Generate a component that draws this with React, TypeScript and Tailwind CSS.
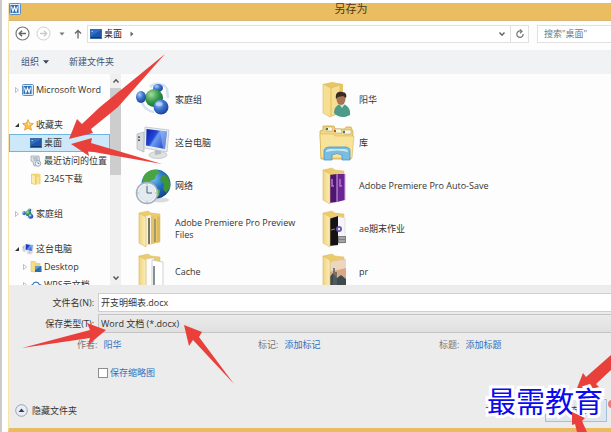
import { useState } from "react";
import type { ReactNode } from "react";

const WordIcon = ({ className }: { className: string }) => (
  <svg viewBox="0 0 12 12" className={className}>
    <rect x="0.5" y="0.5" width="11" height="11" rx="1" fill="#dcebf8" stroke="#5c8fc4" />
    <rect x="1.5" y="2" width="8" height="8" fill="#2f6fb6" />
    <path d="M2.5 3.5l1.4 5 1.6-4.5 1.6 4.5 1.4-5" fill="none" stroke="#fff" strokeWidth="1.1" />
  </svg>
);

const DesktopIcon = ({ className }: { className: string }) => (
  <svg viewBox="0 0 12 10" className={className}>
    <rect x="0.5" y="0.5" width="11" height="9" fill="#1f57ab" stroke="#3c6ba8" />
    <path d="M1 1h10L1 7z" fill="#2f6fc6" />
    <rect x="1" y="8" width="10" height="1" fill="#12366f" />
    <rect x="1.5" y="2" width="1.5" height="1" fill="#9cc8f4" />
  </svg>
);

const StarIcon = () => (
  <svg viewBox="0 0 12 12" className="size-3">
    <path d="M6 0.6l1.6 3.6 3.9.4-2.9 2.6.9 4L6 9.2l-3.5 2 .9-4L.5 4.6l3.9-.4z" fill="#fbc04a" stroke="#e2932b" strokeWidth="0.7" />
    <path d="M6 2l1 2.8 2.6.3L6 6z" fill="#fff0b5" />
  </svg>
);

const RecentIcon = () => (
  <svg viewBox="0 0 12 12" className="size-3">
    <path d="M1 1h8l1 9-6 1-1-4-2-1z" fill="#dde3ea" stroke="#929fae" strokeWidth="0.7" />
    <path d="M3 3h5M3.5 5h4.500" stroke="#7e93aa" strokeWidth="0.8" />
    <circle cx="8" cy="8.500" r="2.800" fill="#eff5fa" stroke="#7d93ab" strokeWidth="0.7" />
    <path d="M8 7v1.600h1.400" stroke="#4b6076" strokeWidth="0.7" fill="none" />
  </svg>
);

const SmallFolder = () => (
  <svg viewBox="0 0 12 12" className="size-3">
    <path d="M1.500 1l5-.5 4 .5v10l-5 .5-4-1z" fill="#f3d672" />
    <path d="M1.500 1l4 1.500v9l-4-1z" fill="#fbebae" stroke="#d9b957" strokeWidth="0.5" />
    <path d="M8 4v7" stroke="#fff3c4" strokeWidth="1" />
  </svg>
);

const SmallDesktopFolder = () => (
  <svg viewBox="0 0 12 12" className="size-3">
    <path d="M1 .5h4l1 1v9.500l-5-.5z" fill="#f5de8a" stroke="#d5b558" strokeWidth="0.5" />
    <path d="M4.500 2h6v8h-6z" fill="#ecd27a" />
    <rect x="5" y="5" width="6.500" height="6" fill="#2d6ca8" />
    <path d="M5 5h6l-6 4z" fill="#5aa0d2" />
  </svg>
);

const CloudIcon = () => (
  <svg viewBox="0 0 12 12" className="size-3">
    <path d="M3 10.500a2.500 2.500 0 0 1-.3-4.900A3.500 3.500 0 0 1 9.300 5.500a2.500 2.500 0 0 1 0 5z" fill="#fff" stroke="#3d7bbd" strokeWidth="1.200" />
  </svg>
);

const HomegroupIcon = ({ className }: { className: string }) => (
  <svg viewBox="0 0 36 36" className={className}>
    <defs>
      <radialGradient id="ballBlue" cx="0.35" cy="0.3" r="0.8">
        <stop offset="0" stopColor="#a8cdf8" />
        <stop offset="0.45" stopColor="#3d74cf" />
        <stop offset="1" stopColor="#17388f" />
      </radialGradient>
      <radialGradient id="ballGreen" cx="0.35" cy="0.3" r="0.8">
        <stop offset="0" stopColor="#a6dca0" />
        <stop offset="0.5" stopColor="#359a4a" />
        <stop offset="1" stopColor="#136035" />
      </radialGradient>
    </defs>
    <path d="M15 5C20 0 29 1 32 7l1 9M6 18c2 7 7 11 13 12" fill="none" stroke="#d3e2f0" strokeWidth="2.5" />
    <ellipse cx="23" cy="6" rx="5" ry="4" fill="url(#ballBlue)" />
    <circle cx="19" cy="16" r="9" fill="url(#ballGreen)" />
    <ellipse cx="6" cy="15" rx="5" ry="6" fill="url(#ballBlue)" />
    <circle cx="26" cy="25" r="7.5" fill="url(#ballBlue)" />
    <ellipse cx="24" cy="22" rx="3.500" ry="2" fill="#c5defa" opacity="0.7" />
  </svg>
);

const ComputerIcon = ({ className }: { className: string }) => (
  <svg viewBox="0 0 36 36" className={className}>
    <defs>
      <linearGradient id="screen" x1="0" y1="0" x2="1" y2="0.6">
        <stop offset="0" stopColor="#0b1fa5" />
        <stop offset="0.45" stopColor="#2447d8" />
        <stop offset="0.55" stopColor="#6d9cf0" />
        <stop offset="1" stopColor="#2a52cf" />
      </linearGradient>
    </defs>
    <path d="M2 9l7-2v20l-7-3z" fill="#d8dcde" stroke="#a3aaad" strokeWidth="0.6" />
    <path d="M3 12l2 .3M3 15l2 .3" stroke="#4d5755" strokeWidth="1.500" />
    <ellipse cx="23" cy="30" rx="9" ry="3.500" fill="#dfe2e4" stroke="#b0b5b8" strokeWidth="0.6" />
    <path d="M20 24l6 1v4l-6 1z" fill="#b7bcc0" />
    <path d="M10 2l24 3-2 22-23-4z" fill="#e8edf0" stroke="#b3bcc2" strokeWidth="0.7" />
    <path d="M11.500 4l20.500 2.500-2 17.500-19-3.500z" fill="url(#screen)" />
    <path d="M25 5.500l7 1-2 17.500-2-.4z" fill="#a8c3f4" opacity="0.5" />
  </svg>
);

const NetworkIcon = () => (
  <svg viewBox="0 0 36 40" className="h-10 w-9">
    <defs>
      <radialGradient id="globe" cx="0.4" cy="0.3" r="0.75">
        <stop offset="0" stopColor="#7cc4f2" />
        <stop offset="0.5" stopColor="#2272c3" />
        <stop offset="1" stopColor="#123c83" />
      </radialGradient>
    </defs>
    <ellipse cx="25" cy="34" rx="9" ry="2.500" fill="#d8dcdf" />
    <circle cx="21" cy="18" r="14.500" fill="url(#globe)" />
    <path d="M10 8c3-3 7-5 12-4l3 3-4 2-1 4-5 2-4 5-3-2c-1-4 0-7 2-10z" fill="#4ba443" />
    <path d="M28 8l4 2c3 4 4 8 3 12l-4 5-3-4 1-5-4-4z" fill="#3a9639" />
    <path d="M20 22l5 2-1 6-4 2z" fill="#54ad42" />
    <circle cx="12" cy="27" r="10.500" fill="#f0f4f7" stroke="#a4b2bd" strokeWidth="1.500" />
    <circle cx="12" cy="27" r="8" fill="#e3ebf1" stroke="#d4dee5" strokeWidth="0.7" />
    <path d="M12 20v7h5" fill="none" stroke="#52606c" strokeWidth="1" />
    <path d="M12 17.500v1M12 35.500v1M2.500 27h1M20.500 27h1" stroke="#7b8995" strokeWidth="1" />
  </svg>
);

// open folder seen from the side, children are what sticks out of it
const Folder = ({ children }: { children?: ReactNode }) => (
  <svg viewBox="0 0 36 38" className="h-[38px] w-9">
    <defs>
      <linearGradient id="flap" x1="0" y1="0" x2="1" y2="0">
        <stop offset="0" stopColor="#f1d47e" />
        <stop offset="1" stopColor="#fbeebb" />
      </linearGradient>
    </defs>
    <path d="M4 3l9-2 3 2 9 1v28l-14 3z" fill="#eccb6c" stroke="#dcbb62" strokeWidth="0.5" />
    {children}
    <path d="M4 3l7 4v30l-7-4z" fill="url(#flap)" stroke="#d9b95f" strokeWidth="0.6" />
  </svg>
);

const UserFolder = () => (
  <svg viewBox="0 0 36 38" className="h-[38px] w-9">
    <path d="M4 3l9-2 11 2v29l-14 4z" fill="#e9c564" />
    <path d="M4 3l8 4 9-3v27l-10 5-7-4z" fill="#f6df93" stroke="#d9b95f" strokeWidth="0.6" />
    <path d="M12 7v28" stroke="#e0bd5c" strokeWidth="1" />
    <path d="M15 32c0-6 4-9 8-9s9 4 8 11c-5 3-12 3-16-2z" fill="#4c9b88" />
    <path d="M20 23l3 4 3-4z" fill="#cbe6dd" />
    <ellipse cx="22" cy="18" rx="4.500" ry="6" fill="#a77350" />
    <path d="M17 18c-1-6 2-8 6-7 4 0 5 3 4 6l-3-2-5 1z" fill="#3a2b22" />
  </svg>
);

const LibraryIcon = () => (
  <svg viewBox="0 0 36 38" className="h-[38px] w-9">
    <path d="M1 7l3-1V2h11l1 3h10l1-2h5l2 5-2 27H2z" fill="#f0d684" stroke="#cda94c" strokeWidth="0.8" />
    <path d="M7 3h6l1 4H7zM16 5h6l1 4h-7zM25 6h7v4h-7z" fill="#fbf7e0" stroke="#b39957" strokeWidth="0.5" />
    <path d="M7 5h2" stroke="#3d7c53" strokeWidth="2" />
    <path d="M15 7h2" stroke="#c2512c" strokeWidth="2" />
    <path d="M24 8h2" stroke="#2b76b5" strokeWidth="2" />
    <path d="M1 10h14l1 2h19l-2 22H2z" fill="#f8e39b" stroke="#d8b65b" strokeWidth="0.6" />
    <path d="M5 36V26q1-3 5-3h16q5 0 5 4v9h-8v-5q-5-3-10 0v5z" fill="#79bde0" stroke="#4d98c5" strokeWidth="0.8" />
    <path d="M7 27q1-2 4-2h14q4 0 4 3-11-3-22 0z" fill="#c9e7f5" />
  </svg>
);

const places = [
  { icon: <HomegroupIcon className="size-9" />, name: "家庭组" },
  { icon: <UserFolder />, name: "阳华" },
  { icon: <ComputerIcon className="size-9" />, name: "这台电脑" },
  { icon: <LibraryIcon />, name: "库" },
  { icon: <NetworkIcon />, name: "网络" },
  {
    icon: (
      <Folder>
        <path d="M10 8l8-1v28l-8 1z" fill="#4d1473" />
        <path d="M18 7h8v26l-8 2z" fill="#6b2592" />
        <path d="M18 7v28M26 7v26" stroke="#d5a6e5" strokeWidth="1" />
        <path d="M13 12v7h2M21 12v7h2" stroke="#b674d8" strokeWidth="1.500" fill="none" />
      </Folder>
    ),
    name: "Adobe Premiere Pro Auto-Save",
  },
  {
    icon: (
      <Folder>
        <path d="M11 6l5-1v29l-5 1z" fill="#f6f0dc" />
        <path d="M14 8v26" stroke="#7b7564" strokeWidth="2" />
        <path d="M16 5l4 2v26l-4 1z" fill="#e5c369" />
        <path d="M20 9v23" stroke="#8e8771" strokeWidth="1.500" />
        <path d="M22 6l3 1v24l-3 2z" fill="#dfba5d" />
      </Folder>
    ),
    name: "Adobe Premiere Pro Preview Files",
  },
  {
    icon: (
      <Folder>
        <path d="M16 6l10 2v25H16z" fill="#f5f5f7" stroke="#cfcfcf" strokeWidth="0.5" />
        <path d="M10 9l9-3v29l-9 1z" fill="#141216" />
        <circle cx="20" cy="19" r="3" fill="#6a55a8" />
        <circle cx="20" cy="19" r="1.200" fill="#e9e4f5" />
        <path d="M12 20l4-1" stroke="#9c8558" strokeWidth="1" />
        <rect x="19" y="26" width="8" height="7" fill="#7d7f80" />
        <path d="M20 28h6M20 31h6" stroke="#c9cacb" strokeWidth="1" />
      </Folder>
    ),
    name: "ae期末作业",
  },
  {
    icon: (
      <Folder>
        <path d="M11 6l8-1v31h-8z" fill="#fcfcfc" stroke="#c9c9c9" strokeWidth="0.5" />
        <path d="M17 7l11 2v27H17z" fill="#fff" stroke="#bdbdbd" strokeWidth="0.7" />
        <path d="M19 13v21" stroke="#5c6a7a" strokeWidth="1.500" />
      </Folder>
    ),
    name: "Cache",
  },
  {
    icon: (
      <Folder>
        <path d="M10 9l17-3v27l-16 3z" fill="#d9a987" />
        <path d="M10 9l17-3v9l-17 4z" fill="#ecd6bd" />
        <path d="M10 25l4-5 4 5 4-3 5 4v8l-16 3z" fill="#3f4a4e" />
        <path d="M15 15v19M17 19v14" stroke="#566061" strokeWidth="1.500" />
      </Folder>
    ),
    name: "pr",
  },
];

const meta = [
  { label: "作者:", value: "阳华" },
  { label: "标记:", value: "添加标记" },
  { label: "标题:", value: "添加标题" },
];

const Caret = ({ open }: { open?: boolean }) => (
  <svg viewBox="0 0 6 6" className="size-1.5 shrink-0">
    {open ? <path d="M5 1v4H1z" fill="#333" /> : <path d="M1.500 .5L4.500 3 1.500 5.500z" fill="#fff" stroke="#a5a5a5" strokeWidth="0.7" />}
  </svg>
);

type RowProps = { icon: ReactNode; label: string; caret?: "open" | "closed"; child?: boolean; active?: boolean };

const TreeRow = ({ icon, label, caret, child, active }: RowProps) => (
  <li className={`flex h-[18px] items-center whitespace-nowrap border ${child ? "pl-3" : "pl-1"} ${active ? "border-[#6fb5e2] bg-[#cde8f8]" : "border-transparent"}`}>
    <span className="flex w-2 shrink-0">{caret && <Caret open={caret === "open"} />}</span>
    <span className="mr-0.5 shrink-0">{icon}</span>
    <a href="#">{label}</a>
  </li>
);

const App = () => {
  const [fileName, setFileName] = useState<string>("开支明细表.docx");
  const [thumb, setThumb] = useState<boolean>(false);

  return (
    <div className="relative overflow-hidden border-l-2 border-[#cbcbcb] bg-white pl-1.5 pt-[3px] font-['Open_Sans','Noto_Sans_CJK_SC',sans-serif] text-[9px] leading-3 text-[#333]">
      <main className="border-b-4 border-l border-b-[#ebbc5f] border-l-[#f8e3a8] bg-[#fdfdfd]">
        {/* Title bar */}
        <header className="flex h-[18px] items-start border-b border-[#dcb574] bg-[#ebbd61]">
          <WordIcon className="size-3" />
          <h1 className="flex-1 pl-[70px] text-center text-[11px] text-[#4a3a1c]">另存为</h1>
        </header>

        {/* Address bar */}
        <nav className="flex h-[29px] items-center pl-1.5 pb-1">
          <button aria-label="Back" className="mr-1.5">
            <svg viewBox="0 0 15 15" className="size-[15px]">
              <circle cx="7.500" cy="7.500" r="6.500" fill="#fff" stroke="#777" strokeWidth="1.200" />
              <path d="M11 7.500H4.500M7 4.800L4.300 7.500 7 10.200" fill="none" stroke="#666" strokeWidth="1.500" />
            </svg>
          </button>
          <button aria-label="Forward" className="mr-2">
            <svg viewBox="0 0 15 15" className="size-[15px]">
              <circle cx="7.500" cy="7.500" r="6.500" fill="#fff" stroke="#d2d2d2" />
              <path d="M4 7.500h6.500M8 4.800l2.700 2.700L8 10.200" fill="none" stroke="#c9c9c9" strokeWidth="1.300" />
            </svg>
          </button>
          <button aria-label="Recent locations" className="mr-2">
            <svg viewBox="0 0 6 4" className="h-1 w-1.5"><path d="M.5 .5h5L3 3.500z" fill="#777" /></svg>
          </button>
          <button aria-label="Up" className="mr-1">
            <svg viewBox="0 0 10 10" className="size-2.5"><path d="M5 9.500V1.500M2 4.500l3-3 3 3" fill="none" stroke="#666" strokeWidth="1.300" /></svg>
          </button>
          <div className="flex h-[18px] flex-1 items-center border border-[#e0e0e0] bg-white pl-0.5">
            <DesktopIcon className="h-2.5 w-3" />
            <a href="#" className="ml-0.5 text-[#222]">桌面</a>
            <svg viewBox="0 0 4 6" className="ml-2 h-1.5 w-1"><path d="M.5 .5L3.500 3 .5 5.500z" fill="#666" /></svg>
            <button aria-label="Previous locations" className="ml-auto mr-1">
              <svg viewBox="0 0 8 6" className="h-1.5 w-2"><path d="M1.500 1.500L4 4.200l2.500-2.700" fill="none" stroke="#666" strokeWidth="1.500" /></svg>
            </button>
            <button aria-label="Refresh" className="flex h-4 w-[18px] items-center justify-center border-l border-[#e0e0e0]">
              <svg viewBox="0 0 10 10" className="size-2.5"><path d="M6.500 2.300A3.200 3.200 0 1 0 8.200 5M4.800 .5l2.200 1.800-2 1.900" fill="none" stroke="#777" strokeWidth="1.200" /></svg>
            </button>
          </div>
          <input aria-label="Search" placeholder={'搜索"桌面"'} className="ml-2 h-[18px] w-[74px] border border-r-0 border-[#e0e0e0] bg-white pl-1.5 placeholder:text-[#777]" />
        </nav>

        {/* Toolbar */}
        <div className="flex h-6 items-center gap-5 bg-[#f0f2f4] pl-3 text-[#3f4f6d]">
          <button className="flex items-center gap-1">
            组织
            <svg viewBox="0 0 6 4" className="h-1 w-1.5"><path d="M0 .3h6L3 3.800z" fill="#3a4658" /></svg>
          </button>
          <button>新建文件夹</button>
        </div>

        <div className="flex h-[211px] overflow-hidden">
          <aside className="w-[101px] shrink-0 overflow-hidden pt-[7px]">
            <ul className="flex flex-col gap-[17px]">
              <li>
                <ul><TreeRow caret="closed" icon={<WordIcon className="size-3" />} label="Microsoft Word" /></ul>
              </li>
              <li>
                <ul>
                  <TreeRow caret="open" icon={<StarIcon />} label="收藏夹" />
                  <TreeRow child active icon={<DesktopIcon className="h-2.5 w-3" />} label="桌面" />
                  <TreeRow child icon={<RecentIcon />} label="最近访问的位置" />
                  <TreeRow child icon={<SmallFolder />} label="2345下载" />
                </ul>
              </li>
              <li>
                <ul><TreeRow caret="closed" icon={<HomegroupIcon className="size-3" />} label="家庭组" /></ul>
              </li>
              <li>
                <ul>
                  <TreeRow caret="open" icon={<ComputerIcon className="size-3" />} label="这台电脑" />
                  <TreeRow child caret="closed" icon={<SmallDesktopFolder />} label="Desktop" />
                  <TreeRow child caret="closed" icon={<CloudIcon />} label="WPS云文档" />
                </ul>
              </li>
            </ul>
          </aside>

          {/* Scrollbar */}
          <div className="flex w-[11px] shrink-0 flex-col items-center bg-[#f0f0f0]">
            <svg viewBox="0 0 8 6" className="my-1 h-1.5 w-2"><path d="M1.500 4.500L4 1.800l2.500 2.700" fill="none" stroke="#555" strokeWidth="1.400" /></svg>
            <div className="h-[87px] w-full bg-[#cdcdcd]" />
            <svg viewBox="0 0 8 6" className="mt-auto mb-1 h-1.5 w-2"><path d="M1.500 1.500L4 4.200l2.500-2.700" fill="none" stroke="#555" strokeWidth="1.400" /></svg>
          </div>

          <ul className="grid flex-1 auto-rows-[43px] grid-cols-[repeat(auto-fill,184px)] pl-3.5 pt-1">
            {places.map((p) => (
              <li key={p.name} className="flex items-center gap-1">
                <span className="shrink-0">{p.icon}</span>
                <a href="#" className="max-w-[134px]">{p.name}</a>
              </li>
            ))}
          </ul>
        </div>

        <form className="bg-[#ececec] pt-2" onSubmit={(e) => e.preventDefault()}>
          <div className="flex items-center">
            <label htmlFor="fileName" className="w-[89px] shrink-0 pr-1 text-right">文件名(N):</label>
            <input
              id="fileName"
              type="text"
              value={fileName}
              onChange={(e) => setFileName(e.target.value)}
              className="h-[19px] min-w-0 flex-1 border border-r-0 border-[#cfcfcf] bg-white pl-0.5"
            />
          </div>
          <div className="mt-0.5 flex items-center">
            <label htmlFor="fileType" className="w-[89px] shrink-0 pr-1 text-right">保存类型(T):</label>
            <select id="fileType" className="h-[19px] min-w-0 flex-1 appearance-none border border-r-0 border-[#c4c4c4] bg-linear-to-b from-[#ebebeb] to-[#e0e0e0] pl-0.5">
              <option>Word 文档 (*.docx)</option>
            </select>
          </div>

          <dl className="mt-1.5 grid grid-cols-[181px_181px_auto] pl-[68px] text-[#777]">
            {meta.map((m) => (
              <div key={m.label} className="flex gap-1.5 whitespace-nowrap">
                <dt>{m.label}</dt>
                <dd><a href="#" className="text-[#2f6fc0]">{m.value}</a></dd>
              </div>
            ))}
          </dl>

          <label className="ml-[89px] mt-4 flex w-fit items-center gap-0.5 text-[#2f6fc0]">
            <input
              type="checkbox"
              checked={thumb}
              onChange={(e) => setThumb(e.target.checked)}
              className="size-2.5 appearance-none border border-[#8c8c8c] bg-white checked:bg-[#2f6fc0]"
            />
            保存缩略图
          </label>

          <div className="mt-5 flex items-center pb-1.5 pl-1.5 pr-1">
            <button type="button" className="flex items-center gap-1">
              <svg viewBox="0 0 13 13" className="size-[13px]">
                <circle cx="6.500" cy="6.500" r="5.800" fill="#e9eef6" stroke="#8e9bb0" strokeWidth="0.9" />
                <path d="M3.500 8l3-3.500 3 3.500z" fill="#33405e" />
              </svg>
              隐藏文件夹
            </button>
            <button type="button" className="ml-auto mr-8">工具(L)</button>
            <button type="submit" className="h-[23px] w-[62px] border border-[#a3c0dc] bg-[#dfe7ee]">保存(S)</button>
          </div>
        </form>
      </main>

      {/* Arrows pointing at the steps */}
      <svg width="240" height="400" className="pointer-events-none absolute -left-0.5 top-0" fill="#e9403c">
        <path d="M69 139L77 119 82 124 100 107 165 54 118 107 91 129 93 133z" />
        <path d="M71 144L92 138 91 143 162 164 88 151 89 156z" />
        <path d="M106 330L87 323 90 330 22 348 90 338 88 345z" />
        <path d="M184 325L202 332 199 337 234 384 193 340 189 346z" />
      </svg>
      <svg width="45" height="80" viewBox="566 352 45 80" className="pointer-events-none absolute bottom-0 right-0" fill="#e9403c">
        <path d="M575 393L583 373 586 377 611 355 611 370 596 384 599 387z" />
        <circle cx="612" cy="404" r="4" fill="#f07a76" />
      </svg>

      <p className="pointer-events-none absolute bottom-3 right-2 text-[29px] leading-9 text-[#0a0af0] [-webkit-text-stroke:6px_white] [paint-order:stroke_fill]">
        最需教育
      </p>
      <svg width="45" height="80" viewBox="566 352 45 80" className="pointer-events-none absolute bottom-0 right-0" fill="#e9403c">
        <path d="M572 412L585 418 582 421 587 432 577 432 575 424 572 425z" />
      </svg>
    </div>
  );
};

export default App;
